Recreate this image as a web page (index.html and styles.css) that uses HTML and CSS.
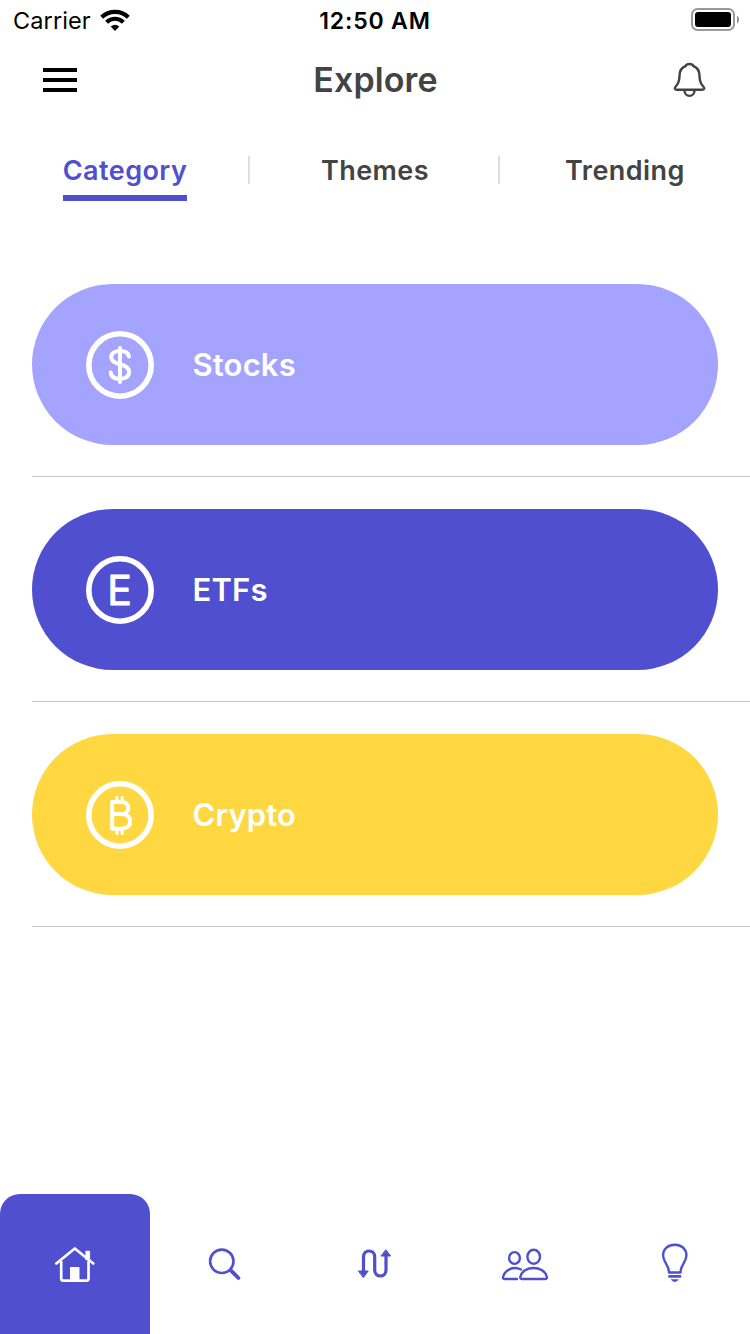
FILE: index.html
```html
<!DOCTYPE html>
<html lang="en">
<head>
<meta charset="utf-8">
<title>Explore</title>
<link rel="stylesheet" href="styles.css">
</head>
<body>
<div class="screen">
  <div class="status">
    <div class="status-left">
      <span class="carrier">Carrier</span>
      <svg class="wifi" viewBox="0 0 30 22" width="30" height="22"><path d="M1.7 8.3C9 1.1 21 1.1 28.3 8.3M6.6 13.2C11.4 8.6 18.6 8.6 23.4 13.2" fill="none" stroke="#000" stroke-width="4.1"/><path d="M15 22L10.7 17.5Q15 13.8 19.3 17.5Z"/></svg>
    </div>
    <span class="time">12:50 AM</span>
    <div class="status-right">
      <svg viewBox="691 8 48 23" width="48" height="23"><rect x="692" y="9" width="42" height="21" rx="5.5" fill="none" stroke="#999" stroke-width="2"/><rect x="695" y="12" width="36" height="15" rx="3"/><path d="M737 15.5Q739 17 739 19.500T737 23.500Z" fill="#888"/></svg>
    </div>
  </div>
  <header class="header">
    <svg class="menu" viewBox="0 0 34 24" width="34" height="24"><path d="M0 2H34M0 12H34M0 22H34" stroke="#000" stroke-width="4"/></svg>
    <h1 class="title">Explore</h1>
    <svg class="bell" viewBox="672 61 36 38" width="36" height="38" fill="none" stroke="#434343" stroke-width="2.400" stroke-linecap="round" stroke-linejoin="round"><path d="M676.500 89.700H702.500C704.500 89.700 704.700 88.100 703.600 87C700.500 83.800 699.600 80.500 699.500 76C699.500 71 697.500 67.500 693.300 66C692.300 63.400 686.700 63.400 685.700 66C681.500 67.500 679.500 71 679.500 76C679.400 80.500 678.500 83.800 675.400 87C674.300 88.100 674.500 89.700 676.500 89.700ZM684.400 90.500C684.800 97.600 694.200 97.600 694.600 90.500"/></svg>
  </header>
  <nav class="tabs">
    <div class="tab tab-active"><span class="tab-label">Category</span></div>
    <div class="tab"><span class="tab-label">Themes</span></div>
    <div class="tab"><span class="tab-label">Trending</span></div>
  </nav>
  <main class="list">
    <div class="row"><div class="card stocks">
      <svg class="coin" viewBox="0 0 68 68" width="68" height="68"><circle cx="34" cy="34" r="31.200"/><path d="M34 17V51M43 25.500C42.500 22 39 20 34 20C28.800 20 25.200 22.300 25.200 26.300C25.200 30.500 29 32 34 33.300C39.500 34.700 43.100 36.500 43.100 41C43.100 45.500 39.500 47.800 34 47.800C28.500 47.800 25 45.500 24.700 41.500" stroke-width="4"/></svg>
      <span class="label">Stocks</span>
    </div></div>
    <div class="row"><div class="card etfs">
      <svg class="coin" viewBox="0 0 68 68" width="68" height="68"><circle cx="34" cy="34" r="31.200"/><text class="coin-letter" x="33.500" y="48.500" text-anchor="middle">E</text></svg>
      <span class="label">ETFs</span>
    </div></div>
    <div class="row"><div class="card crypto">
      <svg class="coin" viewBox="0 0 68 68" width="68" height="68"><circle cx="34" cy="34" r="31.200"/><path d="M26.200 21H35.500C39.500 21 42.300 23.200 42.300 26.800C42.300 30.500 39.500 33 35.500 33H26.500M35.500 33C41 33 44.100 35.800 44.100 40.300C44.100 45 41 47.700 35.500 47.700H26.200V21" stroke-width="4"/><path d="M30.800 16.700V20.500M36.200 16.700V20.500M30.800 48V52.300M36.200 48V52.300" stroke-width="3.300"/></svg>
      <span class="label">Crypto</span>
    </div></div>
  </main>
  <nav class="tabbar">
    <div class="item item-active"><svg viewBox="50 1240 50 50" width="50" height="50" fill="none" stroke="#fff" stroke-width="2.700" stroke-linecap="round" stroke-linejoin="round"><path d="M56.300 1263.500L74.800 1248.500L93.300 1263.500M61.200 1262V1278.500Q61.200 1280.700 63.500 1280.700H86.200Q88.500 1280.700 88.500 1278.500V1262"/><path d="M85.800 1251H89.500V1261L85.800 1257.500ZM70 1267H79.500V1281H70Z" fill="#fff" stroke="none"/><path d="M86 1251H89.700V1260H86Z" fill="#fff" stroke-width="0.500"/></svg></div>
    <div class="item"><svg viewBox="200 1240 50 50" width="50" height="50" fill="none" stroke="#4f4fcf" stroke-linecap="round"><circle cx="221.800" cy="1261.300" r="11.700" stroke-width="2.600"/><path d="M230.800 1270.300L238.400 1278" stroke-width="3.800"/></svg></div>
    <div class="item"><svg viewBox="350 1240 50 50" width="50" height="50" fill="none" stroke="#4f4fcf" stroke-width="3.200" stroke-linecap="round" stroke-linejoin="round"><path d="M363.500 1271V1257C363.500 1249 374.700 1249 374.700 1257V1270C374.700 1278 386 1278 386 1270V1256"/><path d="M358.800 1271H368.200L363.500 1277.300ZM381.300 1256H390.700L386 1250Z" fill="#4f4fcf" stroke-width="1"/></svg></div>
    <div class="item"><svg viewBox="500 1240 50 50" width="50" height="50" fill="none" stroke="#4f4fcf" stroke-width="2.400" stroke-linecap="round" stroke-linejoin="round"><ellipse cx="514.500" cy="1258" rx="5.400" ry="5.900"/><ellipse cx="533.700" cy="1256.800" rx="6.300" ry="7"/><path d="M521 1269.500C512.500 1265.500 504.500 1270.500 503 1277Q502.600 1279 505 1279H517M522.300 1279H545Q547.300 1279 546.900 1277C544.500 1265 522.500 1265 520.300 1277Q519.900 1279 522.300 1279Z"/></svg></div>
    <div class="item"><svg viewBox="650 1240 50 50" width="50" height="50" fill="none" stroke="#4f4fcf" stroke-width="2.400" stroke-linecap="round" stroke-linejoin="round"><path d="M669 1272.500H680.500C680.500 1264.500 686.400 1262.500 686.400 1255.500C686.400 1249 681.500 1244.700 674.800 1244.700S663.100 1249 663.100 1255.500C663.100 1262.500 669 1264.500 669 1272.500Z"/><path d="M669.500 1276.400H680" stroke-width="2.800"/><path d="M670.500 1279.300H679Q674.800 1284.500 670.500 1279.300Z" fill="#4f4fcf" stroke="none"/></svg></div>
  </nav>
</div>
</body>
</html>
```

FILE: styles.css
```css
* { box-sizing: border-box; }
body { margin: 0; background: #fff; font-family: Inter, "Liberation Sans", sans-serif; }
svg { display: block; flex: none; }
.screen { width: 750px; height: 1334px; display: flex; flex-direction: column; overflow: hidden; }
.status { height: 40px; display: grid; grid-template-columns: 1fr auto 1fr; align-items: center; font-size: 24px; line-height: 38px; color: #000; }
.status-left { display: flex; align-items: center; gap: 9px; padding-left: 13px; }
.carrier { font-size: 23.5px; letter-spacing: 0.1px; padding-top: 2px; }
.time { font-size: 23px; font-weight: 600; letter-spacing: 0.85px; padding-top: 2px; }
.status-right { display: flex; justify-content: flex-end; padding: 0 11px 1px 0; }
.header { height: 80px; display: grid; grid-template-columns: 1fr auto 1fr; align-items: center; padding: 0 42px 0 43px; }
.title { margin: 0; font-size: 34px; line-height: 80px; font-weight: 600; letter-spacing: 0.1px; color: #434343; }
.bell { justify-self: end; }
.tabs { height: 132px; display: grid; grid-template-columns: repeat(3, 1fr); padding-top: 36px; }
.tab { height: 28px; display: flex; justify-content: center; }
.tab + .tab { border-left: 2px solid #dedede; margin-left: -2px; }
.tab-label { height: 45px; line-height: 29px; font-size: 27px; font-weight: 600; letter-spacing: 0.45px; color: #434343; white-space: nowrap; }
.tab-active .tab-label { color: #4f4fcf; border-bottom: 6px solid #4f4fcf; }
.list { flex: 1; padding-left: 32px; }
.row { height: 225px; padding: 32px 32px 31px 0; border-bottom: 1px solid #c7c7cb; }
.card { height: 161px; border-radius: 80.5px; display: flex; align-items: center; padding-left: 54px; gap: 38.5px; }
.stocks { background: #a4a3fd; }
.etfs { background: #4f4fcf; }
.crypto { background: #fed741; }
.coin { fill: none; stroke: #fff; stroke-width: 5.6px; stroke-linecap: round; stroke-linejoin: round; }
.coin-letter { font-size: 41px; font-weight: 400; fill: #fff; stroke-width: 0.9px; }
.label { padding-top: 1px; font-size: 31px; line-height: 40px; font-weight: 600; letter-spacing: 0.15px; color: #fff; }
.tabbar { height: 140px; display: grid; grid-template-columns: repeat(5, 1fr); }
.item { display: flex; align-items: center; justify-content: center; padding-top: 2px; }
.item-active { background: #4f4fcf; border-radius: 20px 20px 0 0; }
```
